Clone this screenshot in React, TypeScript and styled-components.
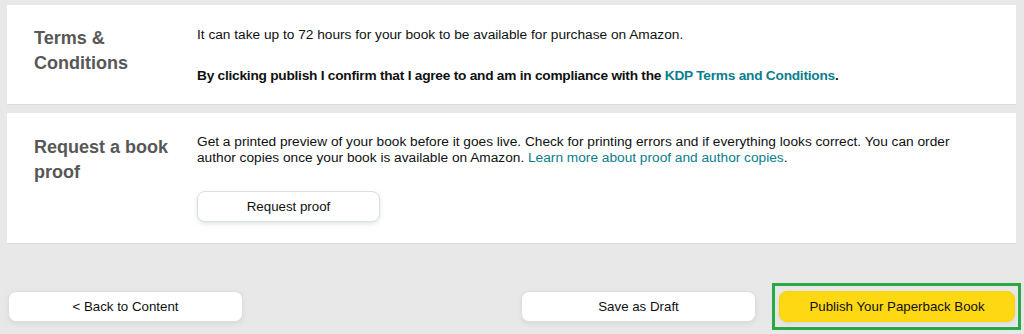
import React from "react";
import styled, { createGlobalStyle } from "styled-components";

const GlobalStyle = createGlobalStyle`
  html, body {
    margin: 0;
    padding: 0;
    background: #e8e8e8;
  }
  body {
    font-family: "Liberation Sans", Arial, sans-serif;
    color: #0f1111;
  }
`;

const Page = styled.div`
  padding: 5px 8px 0 7px;
  display: flex;
  flex-direction: column;
`;

const Sections = styled.div`
  display: flex;
  flex-direction: column;
  gap: 9px;
`;

const Card = styled.section<{ $padTop: number; $padBottom: number }>`
  background: #ffffff;
  box-shadow: 0 1px 0 #dcdcdc;
  display: grid;
  grid-template-columns: 163px 1fr;
  padding: ${(p) => p.$padTop}px 30px ${(p) => p.$padBottom}px 27px;
`;

const Heading = styled.h2<{ $offset?: number }>`
  margin: ${(p) => p.$offset ?? 0}px 0 0 0;
  font-size: 18px;
  line-height: 25px;
  font-weight: 700;
  color: #575757;
`;

const Body = styled.div`
  display: flex;
  flex-direction: column;
  font-size: 13.7px;
`;

const Para = styled.p<{ $bold?: boolean; $lh: number; $mt?: number }>`
  margin: ${(p) => p.$mt ?? 0}px 0 0 0;
  line-height: ${(p) => p.$lh}px;
  font-weight: ${(p) => (p.$bold ? 700 : 400)};
  letter-spacing: ${(p) => (p.$bold ? "-0.24px" : "0")};
`;

const Link = styled.a`
  color: #0a7e8c;
  text-decoration: none;
`;

const Button = styled.button<{ $primary?: boolean; $w: number }>`
  display: block;
  width: ${(p) => p.$w}px;
  height: 31px;
  border-radius: 8px;
  font-family: "Liberation Sans", Arial, sans-serif;
  font-size: 13.3px;
  color: #0f1111;
  cursor: pointer;
  background: ${(p) => (p.$primary ? "#ffd814" : "#ffffff")};
  border: 1px solid ${(p) => (p.$primary ? "#fcd200" : "#dcdfdf")};
  box-shadow: 0 2px 4px rgba(200, 205, 205, 0.5);
  padding: 0;
`;

const ProofButton = styled(Button)`
  margin-top: 25px;
`;

const Highlight = styled.div`
  border: 3px solid #2aa845;
  padding: 5px 3px 5px 4px;
`;

const Footer = styled.div`
  margin-top: 40px;
  display: flex;
  justify-content: space-between;
  align-items: center;
  padding-left: 1px;
`;

const RightGroup = styled.div`
  display: flex;
  align-items: center;
  gap: 16px;
  margin-right: -5px;
`;

export default function App() {
  return (
    <>
      <GlobalStyle />
      <Page>
        <Sections>
          <Card $padTop={20} $padBottom={18}>
            <Heading $offset={1}>
              Terms &amp;
              <br />
              Conditions
            </Heading>
            <Body>
              <Para $lh={20}>
                It can take up to 72 hours for your book to be available for purchase on Amazon.
              </Para>
              <Para $lh={20} $mt={21} $bold>
                By clicking publish I confirm that I agree to and am in compliance with the{" "}
                <Link href="#">KDP Terms and Conditions</Link>.
              </Para>
            </Body>
          </Card>
          <Card $padTop={21} $padBottom={21}>
            <Heading $offset={1}>Request a book proof</Heading>
            <Body>
              <Para $lh={16}>
                Get a printed preview of your book before it goes live. Check for printing errors and if
                everything looks correct. You can order author copies once your book is available on Amazon.{" "}
                <Link href="#">Learn more about proof and author copies</Link>.
              </Para>
              <div>
                <ProofButton $w={183}>Request proof</ProofButton>
              </div>
            </Body>
          </Card>
        </Sections>
        <Footer>
          <Button $w={235}>&lt; Back to Content</Button>
          <RightGroup>
            <Button $w={235}>Save as Draft</Button>
            <Highlight>
              <Button $w={236} $primary>
                Publish Your Paperback Book
              </Button>
            </Highlight>
          </RightGroup>
        </Footer>
      </Page>
    </>
  );
}
